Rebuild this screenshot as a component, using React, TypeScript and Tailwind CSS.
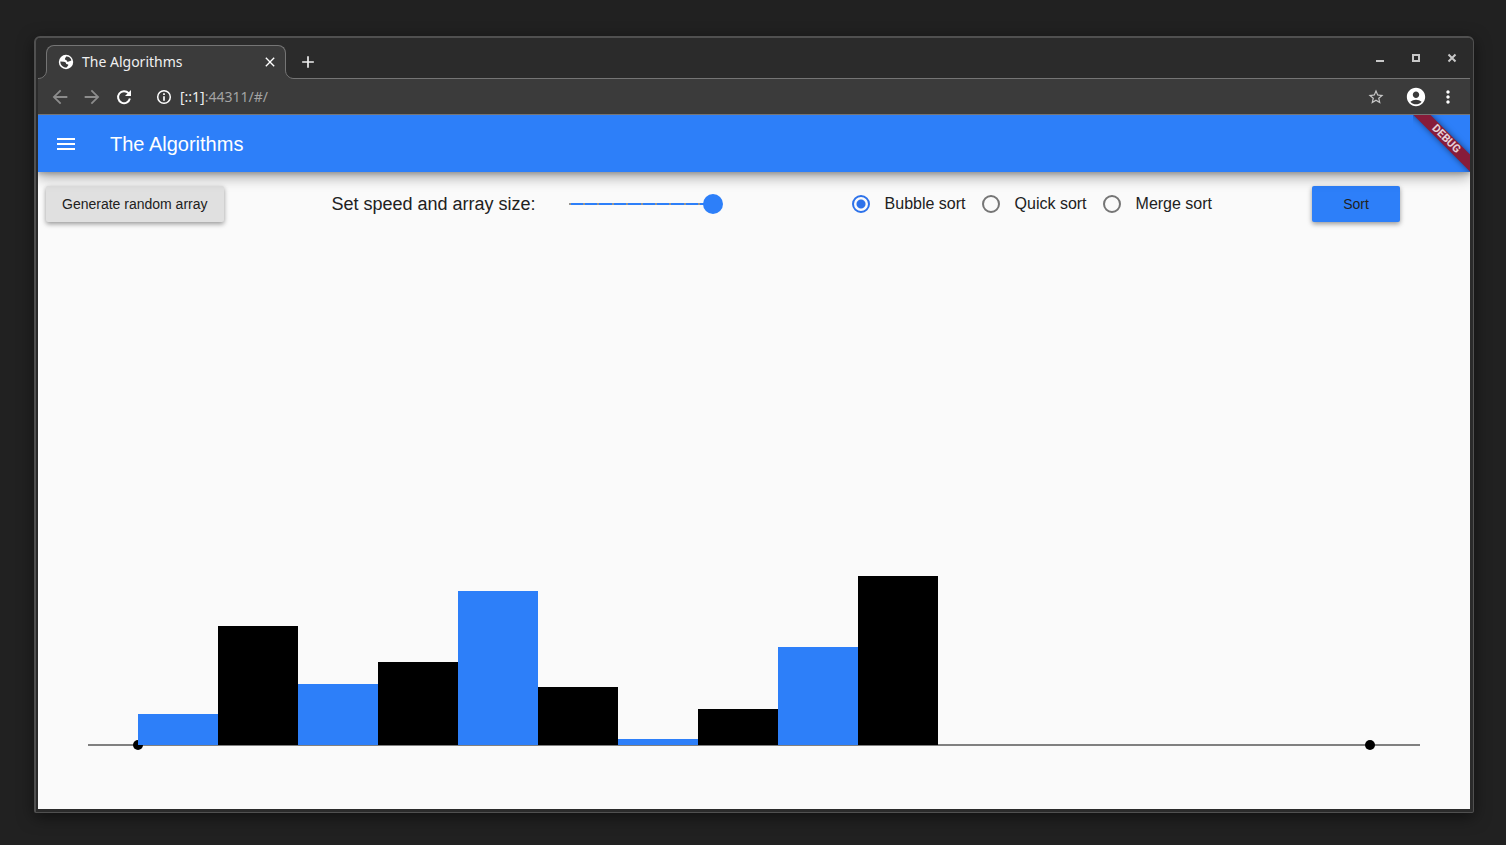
import { useState } from "react";
import { MdClose, MdAdd, MdArrowBack, MdArrowForward, MdStarBorder, MdAccountCircle, MdMoreVert, MdMenu } from "react-icons/md";

const values = [31, 119, 61, 83, 154, 58, 6, 36, 98, 169];
const algorithms = ["Bubble sort", "Quick sort", "Merge sort"];
const ticks = [0, 1, 2, 3, 4, 5, 6, 7, 8, 9, 10];

function GlobeIcon() {
  return (
    <svg width="16" height="16" viewBox="0 0 16 16" className="shrink-0" aria-hidden="true">
      <circle cx="8" cy="8" r="7.2" fill="#fff" />
      <path d="M8.200 2.600C10.500 2.300 12.800 4 13.400 6.200C12.600 7.300 11.500 6.800 10.800 7.600C9.800 8 8.600 7.400 8.800 6.400L7 5.600C6.600 4.400 7.800 3.800 8.200 2.600Z" fill="#3b3b3b" />
      <path d="M2.300 7.600L5.800 7.800C7.500 8 8.200 9 8.200 10L10.200 10.600C10.600 12 9.200 12.400 8.600 13.600C5.200 13.800 2.300 11.200 2.300 7.600Z" fill="#3b3b3b" />
    </svg>
  );
}

function ReloadIcon() {
  return (
    <svg width="16" height="16" viewBox="0 0 16 16" aria-hidden="true">
      <path d="M12.600 4.200A6 6 0 1 0 13.900 9.600" fill="none" stroke="currentColor" strokeWidth="2" />
      <path d="M15 1V7H9Z" fill="currentColor" />
    </svg>
  );
}

function InfoIcon() {
  return (
    <svg width="16" height="16" viewBox="0 0 16 16" className="ml-6 shrink-0" aria-hidden="true">
      <circle cx="8" cy="8" r="6.300" fill="none" stroke="currentColor" strokeWidth="1.500" />
      <path d="M8 4.300V6M8 7.200V11.700" stroke="currentColor" strokeWidth="1.700" />
    </svg>
  );
}

function TabFlare({ flip = false }: { flip?: boolean }) {
  return (
    <svg width="9" height="9" viewBox="0 0 9 9" className={flip ? "z-10 -ml-px shrink-0 self-end -scale-x-100" : "z-10 -mr-px shrink-0 self-end"} aria-hidden="true">
      <path d="M0 9V8.500C5 8.500 8.500 5 8.500 0H9V9Z" fill="#3b3b3b" />
      <path d="M0 8.500C5 8.500 8.500 5 8.500 0" fill="none" stroke="#757575" />
    </svg>
  );
}

function TabStrip() {
  return (
    <div className="flex h-[41px] bg-[#2b2b2b] font-['Noto_Sans',sans-serif] text-[#f0f0f0]">
      <TabFlare />
      <div className="mt-[7px] flex w-[240px] items-center rounded-t-lg border border-b-0 border-[#757575] bg-[#3b3b3b] pr-[7px] pb-0.5 pl-[11px]">
        <GlobeIcon />
        <span className="ml-2 flex-1 text-sm">The Algorithms</span>
        <button aria-label="Close tab"><MdClose size={16} className="text-white" /></button>
      </div>
      <div className="flex flex-1 justify-between shadow-[inset_0_-1px_#757575]">
        <div className="flex items-center">
          <TabFlare flip />
          <button aria-label="New tab" className="mt-1.5 ml-1"><MdAdd size={20} /></button>
        </div>
        <div className="flex items-center gap-6 pr-3 pb-px text-[#c8c8c8]">
          <button aria-label="Minimize">
            <svg width="12" height="12" viewBox="0 0 12 12"><path d="M2 9h8" stroke="currentColor" strokeWidth="2" /></svg>
          </button>
          <button aria-label="Maximize">
            <svg width="12" height="12" viewBox="0 0 12 12"><path d="M3 3h6v6H3z" fill="none" stroke="currentColor" strokeWidth="2" /></svg>
          </button>
          <button aria-label="Close window">
            <svg width="12" height="12" viewBox="0 0 12 12"><path d="M2.500 2.500l7 7M9.500 2.500l-7 7" stroke="currentColor" strokeWidth="2" /></svg>
          </button>
        </div>
      </div>
    </div>
  );
}

function AddressBar() {
  return (
    <div className="flex h-9 items-center border-b border-[#757575] bg-[#3b3b3b] pt-px pr-3 pl-[11px] font-['Noto_Sans',sans-serif] text-sm text-white">
      <button aria-label="Back" className="text-[#8c8c8c]"><MdArrowBack size={22} /></button>
      <button aria-label="Forward" className="ml-2.5 text-[#8c8c8c]"><MdArrowForward size={22} /></button>
      <button aria-label="Reload" className="ml-[13px]"><ReloadIcon /></button>
      <InfoIcon />
      <a href="#/" className="ml-2 flex-1 text-[#a3a3a3]"><span className="text-[#f0f0f0]">[::1]</span>:44311/#/</a>
      <button aria-label="Bookmark" className="text-[#c8c8c8]"><MdStarBorder size={18} /></button>
      <button aria-label="Profile" className="ml-5"><MdAccountCircle size={22} /></button>
      <button aria-label="Browser menu" className="ml-[11px]"><MdMoreVert size={20} /></button>
    </div>
  );
}

function AppBar() {
  return (
    <header className="relative z-10 flex h-[57px] items-center bg-[#2d7ff9] pl-4 text-white shadow-[0_2px_4px_rgba(0,0,0,0.2),0_6px_12px_rgba(0,0,0,0.3)]">
      <button aria-label="Open menu"><MdMenu size={24} /></button>
      <h1 className="ml-8 text-xl">The Algorithms</h1>
      <div className="absolute top-0 right-0 size-[57px] overflow-hidden">
        <div className="absolute top-[18px] -right-[33px] w-[114px] rotate-45 bg-[#871c3a] text-center font-[Roboto,sans-serif] text-[11px] leading-3 font-bold text-white/80 shadow-[0_0_6px_rgba(0,0,0,0.5)]">
          DEBUG
        </div>
      </div>
    </header>
  );
}

function Controls() {
  const [size, setSize] = useState(10);
  const [algorithm, setAlgorithm] = useState("Bubble sort");
  return (
    <div className="flex items-center justify-between pt-[14px] pr-[70px] pl-2 text-[#212121]">
      <button className="h-9 rounded-xs bg-[#e0e0e0] px-4 text-sm shadow-[0_2px_5px_rgba(0,0,0,0.4)]">
        Generate random array
      </button>
      <div className="flex items-center pr-[14px] pl-2">
        <label htmlFor="size" className="text-lg">Set speed and array size:</label>
        <div className="relative ml-[33px] flex h-5 w-[154px] items-center">
          <div className="absolute left-0 flex h-0.5 w-[146px] justify-between bg-[#2d7ff9]">
            {ticks.map((t) => <span key={t} className="size-0.5 bg-[#98958f]" />)}
          </div>
          <input
            id="size"
            type="range"
            min={0}
            max={10}
            value={size}
            onChange={(e) => setSize(Number(e.target.value))}
            className="relative h-5 w-full appearance-none bg-transparent [&::-webkit-slider-thumb]:size-5 [&::-webkit-slider-thumb]:appearance-none [&::-webkit-slider-thumb]:rounded-full [&::-webkit-slider-thumb]:bg-[#2d7ff9]"
          />
        </div>
      </div>
      <fieldset className="flex items-center gap-4 pl-[15px]">
        {algorithms.map((name) => (
          <label key={name} className="flex items-center gap-[15px] text-base">
            <input
              type="radio"
              name="algorithm"
              checked={algorithm === name}
              onChange={() => setAlgorithm(name)}
              className="size-[18px] appearance-none rounded-full border-2 border-[#757575] checked:border-[#2d72ea] checked:bg-[radial-gradient(circle,#2d72ea_4px,transparent_5px)]"
            />
            {name}
          </label>
        ))}
      </fieldset>
      <button className="h-9 w-[88px] rounded-xs bg-[#2d7ff9] text-sm shadow-[0_2px_5px_rgba(0,0,0,0.4)]">
        Sort
      </button>
    </div>
  );
}

function Chart() {
  return (
    <div className="mt-auto px-[50px] pb-[63px]">
      <div className="flex items-end px-[50px]">
        {values.map((v, i) => (
          <div key={i} className={i % 2 === 0 ? "z-10 w-20 bg-[#2d7ff9]" : "z-10 w-20 bg-black"} style={{ height: v }} />
        ))}
      </div>
      <div className="relative -mt-px h-0.5 bg-[#808080]">
        <span className="absolute -top-1 left-[45px] size-2.5 rounded-full bg-black" />
        <span className="absolute -top-1 right-[45px] size-2.5 rounded-full bg-black" />
      </div>
    </div>
  );
}

export default function App() {
  return (
    <div className="flex min-h-screen flex-col bg-[#212121] pt-9 pr-8 pb-8 pl-[34px] font-['Liberation_Sans',Arial,sans-serif]">
      <div className="flex flex-1 flex-col rounded-t-md rounded-b-xs border border-t-2 border-l-2 border-[#505050] bg-[#2b2b2b] pr-[3px] pb-[3px] pl-0.5 shadow-[0_4px_16px_rgba(0,0,0,0.5)]">
        <TabStrip />
        <AddressBar />
        <main className="isolate flex flex-1 flex-col overflow-hidden bg-[#fafafa]">
          <AppBar />
          <Controls />
          <Chart />
        </main>
      </div>
    </div>
  );
}
